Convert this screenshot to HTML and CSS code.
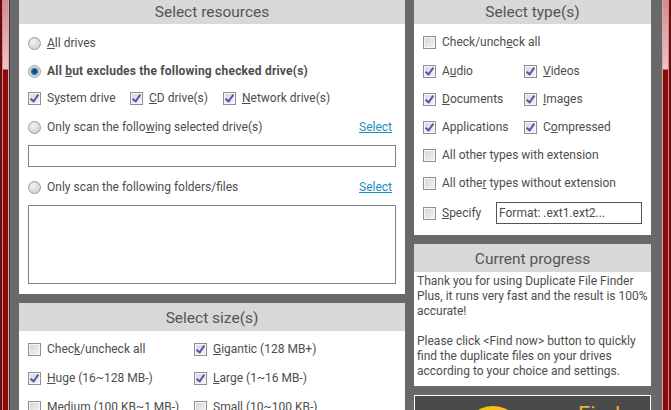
FILE: index.html
```html
<!DOCTYPE html>
<html lang="en">
  <head>
    <meta charset="UTF-8" />
    <title>Duplicate File Finder Plus</title>
    <link rel="stylesheet" href="styles.css">
  </head>
  <body>
    <div class="frame frame-left"></div>
    <div class="main">
      <div class="column col-left">
        <div class="panel panel-resources">
          <div class="panel-title title-cut">Select resources</div>
          <div class="panel-body">
            <div class="row">
              <span class="radio"></span><span class="label"><u>A</u>ll drives</span>
            </div>
            <div class="row">
              <span class="radio on"></span><span class="label bold">All <u>b</u>ut excludes the following checked drive(s)</span>
            </div>
            <div class="row row-drives">
              <span class="check on"></span><span class="label drive-1">S<u>y</u>stem drive</span>
              <span class="check on"></span><span class="label drive-2"><u>C</u>D drive(s)</span>
              <span class="check on"></span><span class="label"><u>N</u>etwork drive(s)</span>
            </div>
            <div class="row">
              <span class="radio"></span><span class="label">Only scan the follo<u>w</u>ing selected drive(s)</span>
              <a class="link">Select</a>
            </div>
            <div class="textbox"></div>
            <div class="row row-folders">
              <span class="radio"></span><span class="label">Only scan the following folders/files</span>
              <a class="link">Select</a>
            </div>
            <div class="textbox textbox-tall"></div>
          </div>
        </div>
        <div class="panel panel-sizes">
          <div class="panel-title">Select size(s)</div>
          <div class="panel-body size-grid">
            <div class="cell"><span class="check"></span><span class="label">Chec<u>k</u>/uncheck all</span></div>
            <div class="cell"><span class="check on"></span><span class="label"><u>G</u>igantic (128 MB+)</span></div>
            <div class="cell"><span class="check on"></span><span class="label"><u>H</u>uge (16~128 MB-)</span></div>
            <div class="cell"><span class="check on"></span><span class="label"><u>L</u>arge (1~16 MB-)</span></div>
            <div class="cell"><span class="check"></span><span class="label">Medium (100 KB~1 MB-)</span></div>
            <div class="cell"><span class="check"></span><span class="label">Small (10~100 KB-)</span></div>
          </div>
        </div>
      </div>
      <div class="column col-right">
        <div class="panel panel-types">
          <div class="panel-title title-cut">Select type(s)</div>
          <div class="panel-body">
            <div class="row row-first">
              <span class="check"></span><span class="label">Check/unch<u>e</u>ck all</span>
            </div>
            <div class="type-grid">
              <div class="cell"><span class="check on"></span><span class="label">A<u>u</u>dio</span></div>
              <div class="cell"><span class="check on"></span><span class="label"><u>V</u>ideos</span></div>
              <div class="cell"><span class="check on"></span><span class="label"><u>D</u>ocuments</span></div>
              <div class="cell"><span class="check on"></span><span class="label"><u>I</u>mages</span></div>
              <div class="cell"><span class="check on"></span><span class="label">Applications</span></div>
              <div class="cell"><span class="check on"></span><span class="label">C<u>o</u>mpressed</span></div>
            </div>
            <div class="row">
              <span class="check"></span><span class="label">All other types with extension</span>
            </div>
            <div class="row">
              <span class="check"></span><span class="label">All othe<u>r</u> types without extension</span>
            </div>
            <div class="row row-specify">
              <span class="check"></span><span class="label specify"><u>S</u>pecify</span>
              <div class="format">Format: .ext1.ext2...</div>
            </div>
          </div>
        </div>
        <div class="panel panel-progress">
          <div class="panel-title">Current progress</div>
          <div class="progress-text">
            Thank you for using Duplicate File Finder Plus, it runs very fast and the result is 100% accurate!<br><br>
            Please click &lt;Find now&gt; button to quickly find the duplicate files on your drives according to your choice and settings.
          </div>
        </div>
        <div class="find-btn">
          <span class="find-icon"></span>
          <span class="find-text">Find</span>
        </div>
      </div>
    </div>
    <div class="frame frame-right"></div>
  </body>
</html>
```

FILE: styles.css
```css
html,
body {
  height: 410px;
}
body {
  margin: 0;
  display: flex;
  overflow: hidden;
  background-color: #696969;
  font-family: Roboto, sans-serif;
  font-size: 12px;
  color: #4d4d4d;
}
.frame {
  flex: none;
  background:
    linear-gradient(to right, #6b0c0c 2px, #c98a8a 2px, #c98a8a 3px, transparent 3px, transparent 8px, #d9a5a5 8px, #d9a5a5 9px, #3e3232 9px),
    linear-gradient(to bottom, #d58a93 0, #eec4c8 69px, #8e0b0b 70px, #8a0808 100%);
}
.frame-left {
  width: 10px;
}
.frame-right {
  width: 9px;
  transform: scaleX(-1);
}
.main {
  flex: 1;
  display: flex;
  gap: 9px;
  padding: 0 11px 0 9px;
}
.column {
  display: flex;
  flex-direction: column;
  gap: 9px;
  height: 410px;
  overflow: hidden;
}
.col-left {
  width: 386px;
}
.col-right {
  width: 237px;
}
.panel {
  background: #ffffff;
  flex: none;
}
.panel-title {
  height: 28px;
  line-height: 30px;
  background: #d8d8d8;
  text-align: center;
  font-size: 15.5px;
  color: #555555;
}
.title-cut {
  height: 24px;
  line-height: 24px;
}
.panel-body {
  padding: 0 9px;
}
.panel-resources {
  height: 294px;
}
.panel-sizes {
  flex: 1;
  overflow: hidden;
}
.panel-types {
  height: 235px;
}
.panel-progress {
  height: 142px;
}
.row {
  display: flex;
  align-items: center;
  height: 18px;
  margin-top: 10px;
}
.row-first {
  margin-top: 9px;
}
.row-drives {
  margin-top: 9px;
  margin-bottom: 11px;
}
.row-folders {
  margin-top: 11px;
}
.row-specify {
  height: 22px;
}
.radio,
.check {
  flex: none;
  box-sizing: border-box;
  width: 13px;
  height: 13px;
  margin-right: 6px;
  border: 1px solid #8e8f8f;
}
.check {
  background: linear-gradient(135deg, #d4d4d4, #f4f4f4);
  box-shadow: inset 0 0 0 1px #f6f6f6;
}
.radio {
  border-radius: 50%;
  border-color: #9c9c9c;
  background: radial-gradient(circle at 40% 35%, #f2f2f2 0, #c9c9c9 100%);
}
.radio.on {
  background: radial-gradient(circle, #123f68 0, #1c5f92 2.5px, #9fc4dc 4px, #e6e6e6 5px);
}
.check.on {
  position: relative;
  background: linear-gradient(135deg, #d6d6e6, #f2f2f8);
}
.check.on::after {
  content: "";
  position: absolute;
  left: 3px;
  top: 0;
  width: 3px;
  height: 7px;
  border: solid #5555a8;
  border-width: 0 2px 2px 0;
  transform: rotate(35deg);
}
.label {
  white-space: nowrap;
}
.bold {
  font-weight: 700;
  letter-spacing: 0.2px;
}
.drive-1 {
  width: 83px;
}
.drive-2 {
  width: 74px;
}
.link {
  margin-left: auto;
  margin-right: 4px;
  color: #1a8fc0;
  text-decoration: underline;
}
.textbox {
  height: 20px;
  margin-top: 9px;
  border: 1px solid #808080;
}
.textbox-tall {
  height: 77px;
}
.size-grid {
  display: grid;
  grid-template-columns: 166px 1fr;
  padding-top: 9px;
  row-gap: 11px;
}
.type-grid {
  display: grid;
  grid-template-columns: 101px 1fr;
  row-gap: 10px;
  margin-top: 11px;
}
.cell {
  display: flex;
  align-items: center;
  height: 18px;
}
.specify {
  width: 54px;
}
.format {
  box-sizing: border-box;
  width: 146px;
  height: 22px;
  line-height: 21px;
  padding-left: 2px;
  border: 1px solid #555555;
}
.progress-text {
  padding: 2px 3px 0;
  line-height: 15px;
}
.find-btn {
  flex: 1;
  display: flex;
  box-sizing: border-box;
  min-height: 0;
  padding: 10px 0 0 48px;
  border: 1px solid #ffffff;
  border-bottom: 0;
  background: #4a4a4a;
  overflow: hidden;
}
.find-icon {
  flex: none;
  width: 60px;
  height: 60px;
  border-radius: 50%;
  background: #f8bf17;
}
.find-text {
  margin: -6px 0 0 55px;
  font-size: 22px;
  line-height: 30px;
  color: #eeb02a;
}
```
